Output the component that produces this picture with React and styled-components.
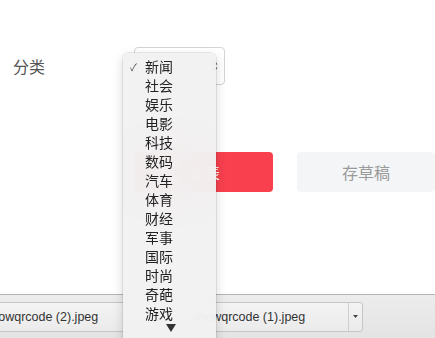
import React from "react";
import styled, { createGlobalStyle } from "styled-components";

const Global = createGlobalStyle`
  html, body { margin: 0; padding: 0; background: #fff; }
  body { font-family: "Noto Sans CJK SC", "Liberation Sans", sans-serif; overflow: hidden; }
`;

const Page = styled.div`
  position: relative;
  width: 435px;
  height: 338px;
  display: flex;
  flex-direction: column;
  overflow: hidden;
`;

const Main = styled.div`
  flex: 1;
  padding-top: 47px;
  display: flex;
  flex-direction: column;
`;

const FieldRow = styled.div`
  display: flex;
  align-items: center;
  height: 38px;
  padding-left: 13px;
`;

const Label = styled.div`
  width: 121px;
  font-size: 16px;
  color: #555;
  line-height: 20px;
`;

const SelectBox = styled.div`
  box-sizing: border-box;
  width: 91px;
  height: 38px;
  border: 1px solid #d4d4d4;
  border-radius: 4px;
  background: #fff;
  display: flex;
  align-items: center;
  justify-content: flex-end;
  padding-right: 6px;
`;

const ButtonRow = styled.div`
  display: flex;
  gap: 24px;
  margin-top: 67px;
  padding-left: 135px;
`;

const Button = styled.div`
  flex: none;
  width: 138px;
  height: 40px;
  border-radius: 4px;
  display: flex;
  align-items: center;
  justify-content: center;
  font-size: 16px;
  background: ${(p) => (p.$primary ? "#f9404f" : "#f4f5f6")};
  color: ${(p) => (p.$primary ? "#fff" : "#9a9a9a")};
`;

const Shelf = styled.div`
  height: 43px;
  border-top: 1px solid #b4b4b4;
  background: linear-gradient(#ececec, #e4e4e4);
  display: flex;
  align-items: center;
`;

const ShelfTrack = styled.div`
  display: flex;
  gap: 7px;
  margin-left: -44px;
`;

const Item = styled.div`
  box-sizing: border-box;
  flex: none;
  width: 200px;
  height: 30px;
  border: 1px solid #c6c6c6;
  border-radius: 3px;
  background: linear-gradient(#f3f3f3, #ebebeb);
  display: flex;
  align-items: stretch;
  font-family: "Liberation Sans", Arial, sans-serif;
  font-size: 12.5px;
  color: #333;
`;

const FileName = styled.div`
  flex: 1;
  display: flex;
  align-items: center;
  padding-left: 28px;
  white-space: nowrap;
  overflow: hidden;
`;

const Caret = styled.div`
  width: 13px;
  border-left: 1px solid #cfcfcf;
  display: flex;
  align-items: center;
  justify-content: center;
`;

const Menu = styled.div`
  position: absolute;
  left: 123px;
  top: 53px;
  width: 93px;
  height: 300px;
  box-sizing: border-box;
  padding-top: 4px;
  border-radius: 5px;
  background: rgba(241, 241, 241, 0.95);
  backdrop-filter: blur(30px);
  box-shadow: 0 0 0 0.5px rgba(0, 0, 0, 0.16), 0 4px 12px rgba(0, 0, 0, 0.16);
`;

const Option = styled.div`
  position: relative;
  height: 19px;
  line-height: 19px;
  padding-left: 22px;
  font-size: 14px;
  color: #222;
`;

const Check = styled.span`
  position: absolute;
  left: 7px;
  top: 0;
  font-size: 10px;
  color: #444;
`;

const ScrollArrow = styled.div`
  display: flex;
  justify-content: center;
  padding-top: 1px;
  padding-left: 2px;
`;

const options = ["新闻", "社会", "娱乐", "电影", "科技", "数码", "汽车", "体育", "财经", "军事", "国际", "时尚", "奇葩", "游戏"];

function CaretDown() {
  return (
    <svg width="5" height="3" viewBox="0 0 5 3">
      <path d="M0 0h5L2.5 3z" fill="#444" />
    </svg>
  );
}

export default function App() {
  return (
    <Page>
      <Global />
      <Main>
        <FieldRow>
          <Label>分类</Label>
          <SelectBox>
            <svg width="7" height="14" viewBox="0 0 7 14">
              <path d="M3.5 1L6.5 5.5H0.5z" fill="#555" />
              <path d="M3.5 13L6.5 8.5H0.5z" fill="#555" />
            </svg>
          </SelectBox>
        </FieldRow>
        <ButtonRow>
          <Button $primary>发表</Button>
          <Button>存草稿</Button>
        </ButtonRow>
      </Main>
      <Shelf>
        <ShelfTrack>
          <Item>
            <FileName>showqrcode (2).jpeg</FileName>
            <Caret><CaretDown /></Caret>
          </Item>
          <Item>
            <FileName>showqrcode (1).jpeg</FileName>
            <Caret><CaretDown /></Caret>
          </Item>
        </ShelfTrack>
      </Shelf>
      <Menu>
        {options.map((o, i) => (
          <Option key={o}>
            {i === 0 && <Check>✓</Check>}
            {o}
          </Option>
        ))}
        <ScrollArrow>
          <svg width="10" height="8" viewBox="0 0 10 8">
            <path d="M0 0h10L5 8z" fill="#333" />
          </svg>
        </ScrollArrow>
      </Menu>
    </Page>
  );
}
